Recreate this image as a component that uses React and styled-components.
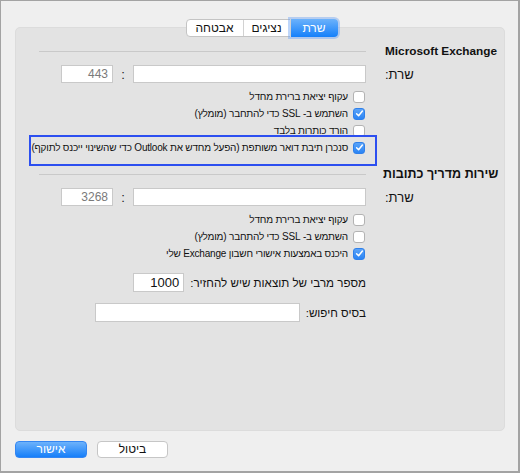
import React from 'react';
import styled, { createGlobalStyle } from 'styled-components';

const Global = createGlobalStyle`
  html, body { margin: 0; padding: 0; background: #efefef; }
  body { font-family: "Liberation Sans", "DejaVu Sans", Arial, sans-serif; }
  * { box-sizing: border-box; }
`;

const Window = styled.div`
  width: 520px;
  height: 473px;
  background: #efefef;
  border: 1px solid #a3a3a3;
  border-right-width: 2px;
  border-bottom-width: 2px;
  padding: 18px 13px 0 14px;
  display: flex;
  flex-direction: column;
  direction: rtl;
  color: #1a1a1a;
`;

const TabBar = styled.div`
  display: flex;
  justify-content: center;
  padding-left: 3px;
  position: relative;
  z-index: 1;
  margin-bottom: -10px;
`;

const Segmented = styled.div`
  display: flex;
  height: 18px;
  background: #fff;
  border: 1px solid #c4c4c4;
  border-radius: 4px;
`;

const Segment = styled.div`
  width: ${p => p.$w}px;
  height: ${p => (p.$active ? 18 : 16)}px;
  margin: ${p => (p.$active ? '-1px -1px -1px 0' : '0')};
  line-height: ${p => (p.$active ? 18 : 16)}px;
  text-align: center;
  font-size: 12px;
  color: ${p => (p.$active ? '#fff' : '#111')};
  background: ${p => (p.$active ? 'linear-gradient(#6cb2fb, #1580fa)' : 'transparent')};
  border-radius: ${p => (p.$active ? '0 4px 4px 0' : '0')};
  box-shadow: ${p => (p.$active ? '0 0 0 2px rgba(110, 165, 245, 0.45)' : 'none')};
  border-left: ${p => (p.$last ? 'none' : '1px solid #d2d2d2')};
`;

const Panel = styled.div`
  flex: 0 0 404px;
  background: #e3e3e3;
  border: 1px solid #dcdcdc;
  border-radius: 5px;
  padding: 15px 9px 0 23px;
  display: flex;
  flex-direction: column;
`;

const Section = styled.div`
  display: grid;
  grid-template-columns: 112px minmax(0, 1fr);
  column-gap: 17px;
  row-gap: 5px;
  align-items: center;
  margin-top: ${p => p.$mt || 0}px;
`;

const HeaderLabel = styled.div`
  height: 17px;
  line-height: 17px;
  font-size: ${p => p.$fs || 11.8}px;
  font-weight: bold;
  white-space: nowrap;
  justify-self: end;
  padding-left: ${p => p.$pl || 0}px;
  color: #111;
`;

const Rule = styled.div`
  height: 1px;
  background: #c9c9c9;
`;

const FieldLabel = styled.div`
  font-size: 13px;
  justify-self: end;
  padding-left: 2px;
  color: #111;
`;

const ServerFields = styled.div`
  display: flex;
  align-items: center;
  gap: 8px;
`;

const TextBox = styled.div`
  width: ${p => p.$w}px;
  height: ${p => p.$h || 18}px;
  background: #fff;
  border: 1px solid #c9c9c9;
  font-size: ${p => p.$fs || 12}px;
  line-height: ${p => (p.$h || 18) - 2}px;
  padding: 0 4px;
  text-align: right;
  color: ${p => p.$muted ? '#7a7a7a' : '#111'};
  direction: ltr;
`;

const Colon = styled.span`
  font-size: 13px;
  width: 4px;
  text-align: center;
`;

const Options = styled.div`
  grid-column: 2;
  display: flex;
  flex-direction: column;
  min-width: 0;
`;

const CheckRow = styled.div`
  position: relative;
  display: flex;
  align-items: center;
  gap: 5px;
  height: 17px;
  padding-right: 1px;
  font-size: 10px;
  letter-spacing: -0.2px;
  white-space: nowrap;
  color: #111;
`;

const Box = styled.span`
  flex: 0 0 12px;
  width: 12px;
  height: 12px;
  border-radius: 3px;
  border: 1px solid ${p => (p.$checked ? '#2f80ea' : '#b3b3b3')};
  background: ${p => (p.$checked ? 'linear-gradient(#5aa3f8, #2a84f5)' : '#fff')};
  display: flex;
  align-items: center;
  justify-content: center;
`;

const Highlight = styled.div`
  position: absolute;
  top: -4px;
  bottom: -10px;
  left: -10px;
  right: -11px;
  border: 2px solid #2c4ff0;
  pointer-events: none;
`;

const ContentRow = styled.div`
  grid-column: 2;
  display: flex;
  align-items: center;
  gap: 6px;
  margin-top: 6px;
  font-size: 11.6px;
  color: #111;
`;

const Footer = styled.div`
  display: flex;
  direction: ltr;
  gap: 10px;
  margin-top: 10px;
`;

const Button = styled.div`
  width: ${p => p.$w}px;
  height: 17px;
  border-radius: 4px;
  font-size: 12px;
  line-height: 15px;
  text-align: center;
  direction: rtl;
  color: ${p => (p.$primary ? '#fff' : '#111')};
  background: ${p => (p.$primary ? 'linear-gradient(#6db2fb, #167ff9)' : '#fff')};
  border: 1px solid ${p => (p.$primary ? '#3486f2' : '#c6c6c6')};
`;

const Check = ({ checked, children, highlight }) => (
  <CheckRow>
    <Box $checked={checked}>
      {checked && (
        <svg width="9" height="9" viewBox="0 0 9 9">
          <path d="M1.6 4.8 L3.6 6.8 L7.4 2" fill="none" stroke="#fff" strokeWidth="1.5" strokeLinecap="round" strokeLinejoin="round" />
        </svg>
      )}
    </Box>
    <span>{children}</span>
    {highlight && <Highlight />}
  </CheckRow>
);

export default function App() {
  return (
    <>
      <Global />
      <Window>
        <TabBar>
          <Segmented>
            <Segment $w={48} $active>שרת</Segment>
            <Segment $w={47}>נציגים</Segment>
            <Segment $w={56} $last>אבטחה</Segment>
          </Segmented>
        </TabBar>
        <Panel>
          <Section>
            <HeaderLabel $pl={2}>Microsoft Exchange</HeaderLabel>
            <Rule />
            <FieldLabel>שרת:</FieldLabel>
            <ServerFields>
              <TextBox $w={233} />
              <Colon>:</Colon>
              <TextBox $w={52} $muted>443</TextBox>
            </ServerFields>
            <Options>
              <Check>עקוף יציאת ברירת מחדל</Check>
              <Check checked>השתמש ב- SSL כדי להתחבר (מומלץ)</Check>
              <Check>הורד כותרות בלבד</Check>
              <Check checked highlight>סנכרן תיבת דואר משותפת (הפעל מחדש את Outlook כדי שהשינוי ייכנס לתוקף)</Check>
            </Options>
          </Section>
          <Section $mt={10}>
            <HeaderLabel $fs={12.5}>שירות מדריך כתובות</HeaderLabel>
            <Rule />
            <FieldLabel>שרת:</FieldLabel>
            <ServerFields>
              <TextBox $w={233} />
              <Colon>:</Colon>
              <TextBox $w={52} $muted>3268</TextBox>
            </ServerFields>
            <Options>
              <Check>עקוף יציאת ברירת מחדל</Check>
              <Check>השתמש ב- SSL כדי להתחבר (מומלץ)</Check>
              <Check checked>היכנס באמצעות אישורי חשבון Exchange שלי</Check>
            </Options>
            <ContentRow>
              <span>מספר מרבי של תוצאות שיש להחזיר:</span>
              <TextBox $w={51} $h={19} $fs={13}>1000</TextBox>
            </ContentRow>
            <ContentRow>
              <span>בסיס חיפוש:</span>
              <TextBox $w={205} $h={19} />
            </ContentRow>
          </Section>
        </Panel>
        <Footer>
          <Button $w={72} $primary>אישור</Button>
          <Button $w={71}>ביטול</Button>
        </Footer>
      </Window>
    </>
  );
}
